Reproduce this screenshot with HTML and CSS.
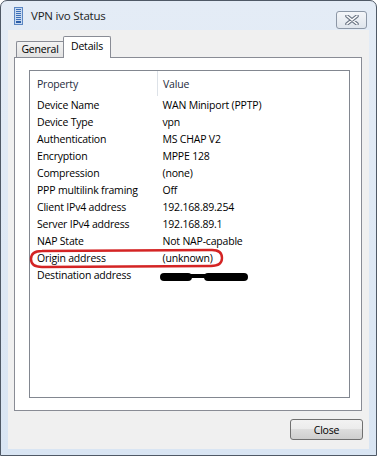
FILE: index.html
```html
<!DOCTYPE html>
<html>
	<head>
		<title>VPN ivo Status</title>
		<link rel="stylesheet" href="styles.css">
	</head>
	<body>
		<div class="window">
			<div class="titlebar">
				<svg class="app-icon" width="9" height="18" viewBox="0 0 9 18">
					<rect x="0.5" y="0.5" width="8" height="17" fill="#c9daf0" stroke="#5b86c2"/>
					<rect x="2" y="2" width="5" height="1" fill="#3b6fb8"/>
					<rect x="2" y="4" width="5" height="1" fill="#3b6fb8"/>
					<rect x="2" y="6" width="5" height="1" fill="#3b6fb8"/>
					<rect x="2" y="8" width="5" height="1" fill="#3b6fb8"/>
					<rect x="2" y="10" width="5" height="1" fill="#3b6fb8"/>
					<rect x="2" y="12" width="5" height="1" fill="#3b6fb8"/>
					<rect x="2" y="14" width="5" height="2" fill="#2c5ea8"/>
				</svg>
				<span class="title">VPN ivo Status</span>
				<div class="close-x">
					<svg width="14" height="10" viewBox="0 0 14 10">
						<path d="M2 1 L12 9 M12 1 L2 9" stroke="#6b7584" stroke-width="3.6" stroke-linecap="round"/>
						<path d="M2 1 L12 9 M12 1 L2 9" stroke="#ffffff" stroke-width="1.6" stroke-linecap="round"/>
					</svg>
				</div>
			</div>
			<div class="client">
				<div class="tabs">
					<div class="tab">General</div>
					<div class="tab active">Details</div>
				</div>
				<div class="panel">
					<div class="listview">
						<table class="props">
							<tr class="head"><th class="col-prop">Property</th><th>Value</th></tr>
							<tr><td>Device Name</td><td>WAN Miniport (PPTP)</td></tr>
							<tr><td>Device Type</td><td>vpn</td></tr>
							<tr><td>Authentication</td><td>MS CHAP V2</td></tr>
							<tr><td>Encryption</td><td>MPPE 128</td></tr>
							<tr><td>Compression</td><td>(none)</td></tr>
							<tr><td>PPP multilink framing</td><td>Off</td></tr>
							<tr><td>Client IPv4 address</td><td>192.168.89.254</td></tr>
							<tr><td>Server IPv4 address</td><td>192.168.89.1</td></tr>
							<tr><td>NAP State</td><td>Not NAP-capable</td></tr>
							<tr><td>Origin address</td><td>(unknown)</td></tr>
							<tr><td>Destination address</td><td></td></tr>
						</table>
					</div>
				</div>
				<div class="footer">
					<button class="btn">Close</button>
				</div>
			</div>
			<!-- hand drawn marks on top of the screenshot -->
			<svg class="marks" width="377" height="457" viewBox="0 0 377 457">
				<path d="M42 251 L212 250 Q222 250 222 258 Q222 266 211 266 L42 267 Q31 267 31 259 Q31 251 42 251 L60 251" fill="none" stroke="#d42424" stroke-width="2.4" stroke-linejoin="round"/>
				<path d="M164 277 L188 277" stroke="#000" stroke-width="8" stroke-linecap="round"/>
				<path d="M188 276 L208 276" stroke="#000" stroke-width="4" stroke-linecap="round"/>
				<path d="M208 277 L244 277" stroke="#000" stroke-width="8" stroke-linecap="round"/>
			</svg>
		</div>
	</body>
</html>
```

FILE: styles.css
```css
body{
	margin: 0;
	background-color: #ffffff;
	font-family: 'Open Sans', sans-serif;
	font-size: 10.5px;
	letter-spacing: -0.2px;
	color: #000;
}
.window{
	position: relative;
	width: 375px;
	height: 454px;
	border: 1px solid #4f5966;
	border-radius: 7px 7px 0 0;
	background: linear-gradient(#e4ecf6, #d9e5f3);
	display: flex;
	flex-direction: column;
}
.titlebar{
	height: 29px;
	display: flex;
	align-items: center;
	padding: 0 9px 0 13px;
}
.title{
	margin-left: 8px;
	font-size: 11.5px;
	color: #1c1c1c;
	flex: 1;
}
.close-x{
	width: 29px;
	height: 16px;
	border: 1px solid #8c97a6;
	border-radius: 3px;
	background: linear-gradient(#f4f6f9, #dfe5ec);
	display: flex;
	align-items: center;
	justify-content: center;
	margin-top: 8px;
}
.client{
	margin: 0 7px;
	height: 412px;
	background-color: #f0f0f0;
	padding: 7px 7px 0 6px;
}
.tabs{
	height: 20px;
	display: flex;
	align-items: flex-end;
	padding-left: 2px;
	position: relative;
	z-index: 1;
}
.tab{
	width: 46px;
	height: 15px;
	border: 1px solid #898c95;
	border-bottom: 0;
	border-right: 0;
	background: linear-gradient(#f3f3f3, #e2e2e2);
	text-align: center;
	line-height: 15px;
	border-radius: 2px 0 0 0;
}
.tab.active{
	width: 46px;
	height: 21px;
	margin-bottom: -1px;
	border-right: 1px solid #898c95;
	background: #ffffff;
	line-height: 18px;
	border-radius: 2px 2px 0 0;
}
.panel{
	height: 328px;
	border: 1px solid #898c95;
	background-color: #ffffff;
	padding: 12px 11px 12px 14px;
}
.listview{
	height: 326px;
	border: 1px solid #828790;
}
.props{
	border-collapse: collapse;
	border-spacing: 0;
	font-size: 10.5px;
}
.props th{
	height: 25px;
	font-weight: normal;
	text-align: left;
	padding: 0 0 0 5px;
	color: #1e2b3c;
}
.props th.col-prop{
	width: 120px;
	padding-left: 7px;
	border-right: 1px solid #dde2e8;
}
.props td{
	height: 17px;
	padding: 0 0 0 5px;
	white-space: nowrap;
}
.props td:first-child{
	padding-left: 7px;
}
.footer{
	display: flex;
	justify-content: flex-end;
	padding-top: 8px;
	margin-right: -1px;
}
.btn{
	width: 73px;
	height: 21px;
	border: 1px solid #707070;
	border-radius: 3px;
	background: linear-gradient(#f2f2f2 0%, #ebebeb 50%, #dddddd 50%, #cfcfcf 100%);
	font-family: 'Open Sans', sans-serif;
	font-size: 10.5px;
	letter-spacing: -0.2px;
	color: #000;
	padding: 0;
}
.marks{
	position: absolute;
	left: -1px;
	top: -1px;
	pointer-events: none;
}
```
